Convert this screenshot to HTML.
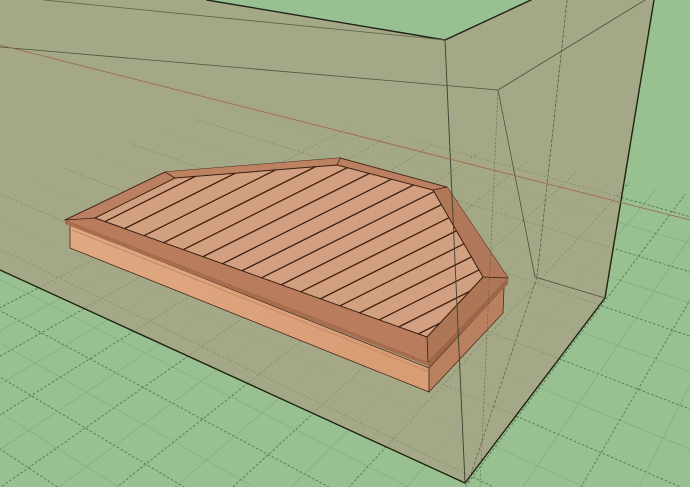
<!DOCTYPE html>
<html><head><meta charset="utf-8"><style>html,body{margin:0;padding:0;background:#98c091;overflow:hidden;width:690px;height:487px}svg{display:block}</style></head>
<body>
<svg id="s" width="690" height="487" viewBox="0 0 690 487" xmlns="http://www.w3.org/2000/svg">
<defs>
<clipPath id="gc"><polygon points="0,190 235,105 690,195 690,487 0,487"/></clipPath>
<clipPath id="dc"><polygon points="95,218 175,178 337,165 433,190 483,277 427,337"/></clipPath>
<linearGradient id="fas" x1="0" y1="0" x2="1" y2="0.4"><stop offset="0" stop-color="#e0a983"/><stop offset="1" stop-color="#d99d76"/></linearGradient>
</defs>
<rect width="690" height="487" fill="#98c091"/>
<g id="grid" clip-path="url(#gc)"></g>
<polygon points="0,0 207,0 445,40 531,0 654,0 605,298 465,483 0,270" fill="#a5a886"/>
<g id="grid2" clip-path="url(#gc)" opacity="0.45"></g>
<polygon points="207,0 445,40 531,0" fill="#98c091"/>
<polygon points="70,225 429,368 429,392 70,248" fill="url(#fas)" stroke="#4a2a1a" stroke-width="0.8"/>
<polygon points="429,368 504,287 503,313 429,392" fill="#b98060" stroke="#4a2a1a" stroke-width="0.8"/>
<line x1="72" y1="230" x2="429" y2="372" stroke="#c48a65" stroke-width="1"/>
<polygon points="65,220 165,172 340,158 447,187 508,278 428,362" fill="#bb8061" stroke="#4a2a1a" stroke-width="1"/>
<polygon points="65,220 428,362 428,366 65,224" fill="#a86c4e"/>
<polygon points="428,362 508,278 508,284 428,368" fill="#9e6548"/>
<polygon points="65,220 95,218 427,337 428,362" fill="#b97d5e"/>
<polygon points="427,337 483,277 508,278 428,362" fill="#ad7656"/>
<polygon points="433,190 447,187 508,278 483,277" fill="#b07858"/>
<polygon points="165,172 175,178 337,165 340,158" fill="#bc8262"/>
<polygon points="95,218 175,178 337,165 433,190 483,277 427,337" fill="#d2a080" stroke="#3a1e10" stroke-width="1"/>
<g id="boards" clip-path="url(#dc)"></g>
<g stroke="#3a1e10" stroke-width="0.8" fill="none">
<line x1="65" y1="220" x2="95" y2="218"/><line x1="165" y1="172" x2="175" y2="178"/>
<line x1="340" y1="158" x2="337" y2="165"/><line x1="447" y1="187" x2="433" y2="190"/>
<line x1="508" y1="278" x2="483" y2="277"/><line x1="428" y1="362" x2="427" y2="337"/>
</g>
<g fill="none" stroke-linecap="round">
<polyline points="207,0 445,40 531,0" stroke="#1e2416" stroke-width="1.4"/>
<line x1="445" y1="40" x2="465" y2="483" stroke="#3a4030" stroke-width="0.9"/>
<line x1="654" y1="0" x2="605" y2="298" stroke="#1e2416" stroke-width="1.4"/>
<polyline points="0,270 465,483 605,298" stroke="#1e2416" stroke-width="1.4"/>
<line x1="44" y1="0" x2="445" y2="40" stroke="#5a6048" stroke-width="0.8"/>
<polyline points="0,47 498,90 645,0" stroke="#4c5240" stroke-width="0.8"/>
<polyline points="498,90 535,277 605,298" stroke="#4c5240" stroke-width="0.8"/>
<line x1="498" y1="90" x2="480" y2="487" stroke="#4c5240" stroke-width="0.6" stroke-dasharray="2,2" opacity="0.7"/>
<line x1="567" y1="0" x2="537" y2="277" stroke="#4c5240" stroke-width="0.7" stroke-dasharray="3,2"/>
<line x1="537" y1="277" x2="468" y2="483" stroke="#4c5240" stroke-width="0.6" stroke-dasharray="3,2"/>
<line x1="0" y1="45" x2="690" y2="220" stroke="#9c6a50" stroke-width="0.9"/>
</g>
</svg>
<script>
(function(){
var NS="http://www.w3.org/2000/svg";
function L(g,x1,y1,x2,y2,c,w,d){var l=document.createElementNS(NS,"line");l.setAttribute("x1",x1);l.setAttribute("y1",y1);l.setAttribute("x2",x2);l.setAttribute("y2",y2);l.setAttribute("stroke",c);l.setAttribute("stroke-width",w);if(d)l.setAttribute("stroke-dasharray",d);g.appendChild(l);}
function grid(g){
 var vp1=[-1100,-280], y=150, dy=20;
 for(var k=0;k<30;k++){var x2=1400,t=(x2-vp1[0])/(690-vp1[0]);L(g,vp1[0],vp1[1],x2,vp1[1]+(y-vp1[1])*t,k%2?"#5d7a56":"#86aa7f",k%2?0.9:0.6,k%2?"2.5,2":null);y+=dy;dy+=2.2;}
 var vp2=[981,-199];
 for(var k=-14;k<8;k++){var xb=465+k*58;var t=(800-vp2[1])/(487-vp2[1]);L(g,vp2[0],vp2[1],vp2[0]+(xb-vp2[0])*t,800,k%2?"#86aa7f":"#5d7a56",k%2?0.6:0.9,k%2?null:"2.5,2");}
}
grid(document.getElementById("grid"));grid(document.getElementById("grid2"));
var b=document.getElementById("boards");
var dx=100,dy2=-50;
for(var i=0;i<17;i++){var u=0.03+i*0.059;var px=95+(427-95)*u,py=218+(337-218)*u;L(b,px-dx*5,py-dy2*5,px+dx*5,py+dy2*5,"#3a1e10",1.3);}
})();
</script>
</body></html>
